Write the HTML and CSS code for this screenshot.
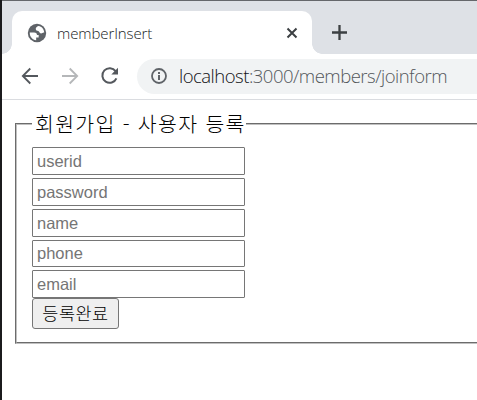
FILE: index.html
```html
<!DOCTYPE html>
<html lang="ko">
<head>
<meta charset="utf-8">
<title>memberInsert</title>
<link rel="stylesheet" href="styles.css">
</head>
<body>
<div class="window">
  <header class="tabs">
    <div class="tab">
      <svg class="globe" width="20" height="20" viewBox="0 0 24 24"><circle cx="12" cy="12" r="11" fill="#5f6368"/><path fill="#fff" d="M3.300 11.500H8.500c2 0 3.500 1 3.500 3h2v3h-3v3.200C6.500 20.200 3.300 16.500 3.300 12zM14 3.500c-1.500.3-3.500 1.500-3.500 3.500s1.300 2.500 3 2.700c1.300.2 1.300 2.800 3.300 2.800 1.700 0 2-1.300 3.900-1C20.300 7 17.500 4 14 3.500z"/></svg>
      <span class="title">memberInsert</span>
      <svg class="close" width="12" height="12" viewBox="0 0 12 12"><path d="M1.500 1.500l9 9m0-9l-9 9" stroke="#3c4043" stroke-width="2"/></svg>
    </div>
    <svg class="plus" width="16" height="16" viewBox="0 0 16 16"><path d="M8.500 1v15M1 8.500h15" stroke="#3c4043" stroke-width="2.300"/></svg>
  </header>
  <nav class="toolbar">
    <svg class="back" width="18" height="18" viewBox="0 0 18 18"><path d="M17 9H2M9.300 1.500L1.800 9l7.500 7.500" fill="none" stroke="#54585d" stroke-width="1.800"/></svg>
    <svg class="forward" width="18" height="18" viewBox="0 0 18 18"><path d="M1 9h15M8.700 1.500L16.200 9l-7.500 7.500" fill="none" stroke="#b5b7b9" stroke-width="1.800"/></svg>
    <svg class="reload" width="20" height="20" viewBox="0 0 20 20"><path d="M16.400 12.300A7.300 7.300 0 1 1 15.600 5.200" fill="none" stroke="#54585d" stroke-width="2"/><path d="M18 1.800v6.700h-6.700z" fill="#54585d"/></svg>
    <div class="address">
      <svg width="16" height="16" viewBox="0 0 16 16"><circle cx="8" cy="8" r="7" fill="none" stroke="#5f6368" stroke-width="1.800"/><path d="M8 7v5M8 4v2" stroke="#5f6368" stroke-width="2"/></svg>
      <span class="url"><span class="host">localhost</span>:3000/members/joinform</span>
    </div>
  </nav>
  <main>
    <fieldset>
      <legend>회원가입 - 사용자 등록</legend>
      <form>
        <input type="text" placeholder="userid">
        <input type="password" placeholder="password">
        <input type="text" placeholder="name">
        <input class="phone" type="text" placeholder="phone">
        <input type="text" placeholder="email">
        <button type="button">등록완료</button>
      </form>
    </fieldset>
  </main>
</div>
</body>
</html>
```
FILE: styles.css
```css
* { box-sizing: border-box; }
html, body { margin: 0; height: 400px; overflow: hidden; background: #fff; }
svg { display: block; flex: none; }
.window {
  height: 400px;
  border-left: 2px solid #1b1b1d;
  overflow: hidden;
}
.tabs {
  display: flex;
  height: 54px;
  padding: 10px 0 0 10px;
  border-top: 1px solid #65676b;
  background: #dee1e6;
}
.tab {
  position: relative;
  display: flex;
  align-items: center;
  width: 300px;
  height: 43px;
  padding: 0 14px 0 15px;
  border-radius: 10px 10px 0 0;
  background: #fff;
}
.tab::before, .tab::after {
  content: "";
  position: absolute;
  bottom: 0;
  width: 10px;
  height: 10px;
}
.tab::before { left: -10px; background: radial-gradient(circle at 0 0, transparent 9.500px, #fff 10px); }
.tab::after { right: -10px; background: radial-gradient(circle at 100% 0, transparent 9.500px, #fff 10px); }
.title {
  flex: 1;
  margin-left: 10px;
  font: 300 15px/20px "Open Sans", "Noto Sans", sans-serif;
  letter-spacing: -0.100px;
  color: #202326;
  white-space: nowrap;
}
.plus { margin: 13px 0 0 19px; }
.toolbar {
  display: flex;
  align-items: center;
  height: 46px;
  padding: 0 0 1px 19px;
  border-bottom: 1px solid #dadce0;
  background: #fff;
}
.forward { margin-left: 22px; }
.reload { margin-left: 21px; }
.address {
  flex: 1;
  display: flex;
  align-items: center;
  height: 35px;
  margin-left: 17px;
  padding-left: 14px;
  border-radius: 18px 0 0 18px;
  background: #f1f3f4;
}
.url {
  margin-left: 12px;
  font: 300 18.500px/28px "Open Sans", "Noto Sans", sans-serif;
  letter-spacing: -0.500px;
  color: #53575b;
  white-space: nowrap;
}
.host { color: #101114; }
main { padding: 10px 0 0 13px; }
fieldset {
  width: 500px;
  height: 234px;
  margin: 0;
  padding: 10px 15px 0;
  border: 2px groove #c0c0c0;
}
legend {
  width: 214px;
  height: 27px;
  padding: 0 3px;
  font: 400 20.500px/27px "Noto Sans CJK KR", sans-serif;
  font-weight: 300;
  letter-spacing: 1.300px;
  color: #000;
  white-space: nowrap;
}
form { display: flex; flex-direction: column; align-items: flex-start; }
input {
  width: 213px;
  height: 28px;
  margin: 0 0 3px;
  padding: 0 4px;
  border: 1px solid #767676;
  border-radius: 1px;
  font: 16.500px/24px "Liberation Sans", Arial, sans-serif;
}
input::placeholder { color: #757575; }
.phone { height: 27px; }
input:last-of-type { margin-bottom: 0; }
button {
  width: 87px;
  height: 31px;
  padding: 0 0 2px;
  border: 1px solid #767676;
  border-radius: 3px;
  background: #efefef;
  font: 300 17.500px/26px "Noto Sans CJK KR", sans-serif;
  letter-spacing: 0.500px;
  color: #000;
}
```
